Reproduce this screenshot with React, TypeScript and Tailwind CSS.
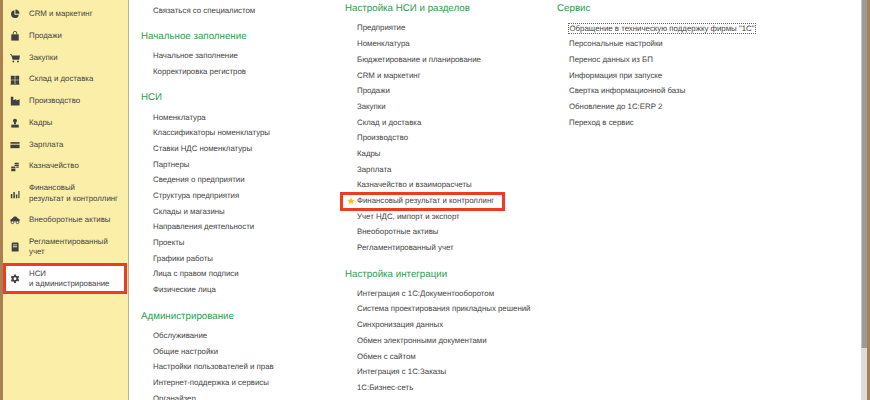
import React from "react";

const I = ({ children }: { children: React.ReactNode }) => (
  <svg viewBox="0 0 12 12" className="w-[10px] h-[10px] shrink-0 text-[#404040]" fill="currentColor">{children}</svg>
);

const icons: Record<string, React.ReactNode> = {
  crm: <><path d="M5.3 1.5A4.7 4.7 0 1 0 10.6 6.8H5.3Z" /><path d="M6.5 0.6A4.9 4.9 0 0 1 11.4 5.6H6.5Z" /></>,
  bag: <><path d="M1.5 4h9v7.5h-9Z" /><path d="M4 4V2.4a2 2 0 0 1 4 0V4" fill="none" stroke="currentColor" strokeWidth="1" /></>,
  cart: <><path d="M0 1.5h2l.5 1.5H12l-1 5H3.2L1.4 2.4H0Z" /><circle cx="4" cy="10.2" r="1.1" /><circle cx="9.6" cy="10.2" r="1.1" /></>,
  grid: <><path d="M1 1h4.6v4.6H1ZM6.4 1H11v4.6H6.4ZM1 6.4h4.6V11H1ZM6.4 6.4H11V11H6.4Z" /><path d="M0.5 11h11v.7H.5Z" /></>,
  factory: <path d="M1 1h3v4l3.5-1.5V5.5L11.5 4v7.5H1Z" />,
  person: <><circle cx="6" cy="3.2" r="2.4" /><path d="M4.8 5h2.4v2.5H4.8Z" /><path d="M1.5 8h9v3.5h-9Z" /></>,
  card: <><path d="M.5 2.5h11v2H.5Z" /><path d="M.5 5.6h11v4.2H.5Z" /></>,
  coins: <><path d="M5.5 1h5v1.6h-5ZM5.5 3.2h5v1.6h-5ZM7.5 5.4h3v1.6h-3Z" /><path d="M1.5 5.5h5v2h-5ZM1.5 8h5v3h-5Z" /></>,
  bars: <><path d="M1 6h1.8v5H1ZM4 3.5h1.8V11H4ZM7 6.5h1.8V11H7ZM10 2.5h1.4V11H10Z" /></>,
  car: <><path d="M3.2 3.5 5 1.8h2.4l1.8 2.2 2.3 1.2v2.6H.5V5.6Z" /><circle cx="3" cy="8.8" r="1.6" fill="#fbeea8" stroke="currentColor" strokeWidth="1" /><circle cx="9" cy="8.8" r="1.6" fill="#fbeea8" stroke="currentColor" strokeWidth="1" /></>,
  doc: <path fillRule="evenodd" d="M2 1.5 3 .7h6.5l.8.8v10H2ZM3.5 3v1h5V3ZM3.5 5.2v1h5v-1Z" />,
  gear: <path fillRule="evenodd" d="M5 .5h2l.3 1.5 1.2.6L9.9 2l1.1 1.6-1 1.1v1.4l1 1.2-1 1.7-1.5-.5-1.2.6L7 10.9H5l-.3-1.5-1.2-.6-1.4.5-1-1.7 1-1.2V5l-1-1.2 1-1.7 1.4.5 1.2-.6ZM6 4a1.7 1.7 0 1 0 0 3.4A1.7 1.7 0 0 0 6 4Z" />,
};

const nav: { icon: string; lines: string[]; two?: boolean; active?: boolean }[] = [
  { icon: "crm", lines: ["CRM и маркетинг"] },
  { icon: "bag", lines: ["Продажи"] },
  { icon: "cart", lines: ["Закупки"] },
  { icon: "grid", lines: ["Склад и доставка"] },
  { icon: "factory", lines: ["Производство"] },
  { icon: "person", lines: ["Кадры"] },
  { icon: "card", lines: ["Зарплата"] },
  { icon: "coins", lines: ["Казначейство"] },
  { icon: "bars", lines: ["Финансовый", "результат и контроллинг"], two: true },
  { icon: "car", lines: ["Внеоборотные активы"] },
  { icon: "doc", lines: ["Регламентированный", "учет"], two: true },
  { icon: "gear", lines: ["НСИ", "и администрирование"], two: true, active: true },
];

const NavItem = ({ n }: { n: (typeof nav)[number] }) => (
  <div className={`relative flex items-center pl-[7px] ${n.two ? "h-[32px]" : "h-[21.75px]"}`}>
    {n.active && <div className="absolute left-0 right-0 -top-[0.5px] h-[31px] bg-white border-[3px] border-[#ee3b24]" />}
    <div className="relative flex items-center gap-[9px]">
      <I>{icons[n.icon]}</I>
      <div className="leading-[10.5px] whitespace-nowrap">
        {n.lines.map((l) => (
          <div key={l}>{l}</div>
        ))}
      </div>
    </div>
  </div>
);

const Item = ({ children, focus }: { children: React.ReactNode; focus?: boolean }) => (
  <div className="h-[15.7px] flex items-center pl-[12px] whitespace-nowrap relative">
    {focus ? (
      <span className="border border-dotted border-[#666] -ml-[1px] px-[0.5px] leading-[9px]">{children}</span>
    ) : (
      children
    )}
  </div>
);

const Head = ({ children, first }: { children: React.ReactNode; first?: boolean }) => (
  <div className={`h-[16px] pt-[2px] flex items-center text-[9.75px] text-[#2f9d4b] mb-[4px] whitespace-nowrap ${first ? "" : "mt-[10px]"}`}>
    {children}
  </div>
);

export default function App() {
  return (
    <div
      className="w-[870px] h-[400px] overflow-hidden flex bg-white text-[7.85px] text-[#444444] [text-rendering:geometricPrecision]"
      style={{ fontFamily: '"Liberation Sans", Arial, sans-serif' }}
    >
      <div className="w-[3px] bg-[#a98050] shrink-0" />
      <div className="w-[126px] shrink-0 bg-[#fbeea8] border-r border-[#b9b39b] pt-[3.6px] pr-[1px]">
        {nav.map((n) => (
          <NavItem key={n.icon} n={n} />
        ))}
      </div>
      <div className="flex-1 flex min-w-0 pl-[12px]">
        <div className="w-[204px] shrink-0 pt-[2.6px]">
          <Item>Связаться со специалистом</Item>
          <Head>Начальное заполнение</Head>
          <Item>Начальное заполнение</Item>
          <Item>Корректировка регистров</Item>
          <Head>НСИ</Head>
          {["Номенклатура", "Классификаторы номенклатуры", "Ставки НДС номенклатуры", "Партнеры", "Сведения о предприятии", "Структура предприятия", "Склады и магазины", "Направления деятельности", "Проекты", "Графики работы", "Лица с правом подписи", "Физические лица"].map((t) => (
            <Item key={t}>{t}</Item>
          ))}
          <Head>Администрирование</Head>
          {["Обслуживание", "Общие настройки", "Настройки пользователей и прав", "Интернет-поддержка и сервисы", "Органайзер"].map((t) => (
            <Item key={t}>{t}</Item>
          ))}
        </div>
        <div className="w-[212px] shrink-0 pt-[0.5px]">
          <Head first>Настройка НСИ и разделов</Head>
          {["Предприятие", "Номенклатура", "Бюджетирование и планирование", "CRM и маркетинг", "Продажи", "Закупки", "Склад и доставка", "Производство", "Кадры", "Зарплата", "Казначейство и взаиморасчеты"].map((t) => (
            <Item key={t}>{t}</Item>
          ))}
          <Item>
            <div className="absolute -left-[5px] -top-[1.2px] w-[165px] h-[19px] border-[3px] border-[#ee3b24]" />
            <svg viewBox="0 0 10 10" className="absolute left-[1.5px] top-[3.5px] w-[8px] h-[8px]" fill="#f6c233">
              <path d="M5 .3 6.4 3.4l3.3.3-2.5 2.2.8 3.3L5 7.4 2 9.2l.7-3.3L.3 3.7l3.3-.3Z" />
            </svg>
            Финансовый результат и контроллинг
          </Item>
          {["Учет НДС, импорт и экспорт", "Внеоборотные активы", "Регламентированный учет"].map((t) => (
            <Item key={t}>{t}</Item>
          ))}
          <Head>Настройка интеграции</Head>
          {["Интеграция с 1С:Документооборотом", "Система проектирования прикладных решений", "Синхронизация данных", "Обмен электронными документами", "Обмен с сайтом", "Интеграция с 1С:Заказы", "1С:Бизнес-сеть"].map((t) => (
            <Item key={t}>{t}</Item>
          ))}
        </div>
        <div className="flex-1 min-w-0 pt-[0.5px]">
          <Head first>Сервис</Head>
          <Item focus>Обращение в техническую поддержку фирмы "1С"</Item>
          {["Персональные настройки", "Перенос данных из БП", "Информация при запуске", "Свертка информационной базы", "Обновление до 1С:ERP 2", "Переход в сервис"].map((t) => (
            <Item key={t}>{t}</Item>
          ))}
        </div>
      </div>
      <div className="w-[6px] shrink-0 bg-[#dcdcdc]">
        <div className="h-[348px] bg-[#9a9a9a] border-l border-[#c4c4c4]" />
      </div>
      <div className="w-[3px] shrink-0 bg-[#a98050]" />
    </div>
  );
}
